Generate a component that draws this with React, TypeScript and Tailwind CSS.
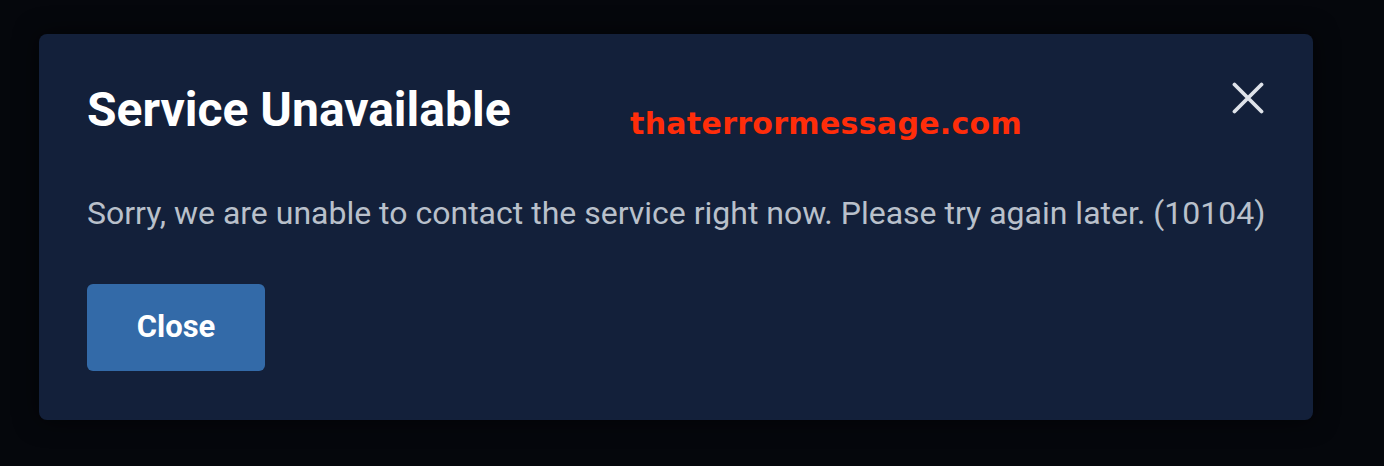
export default function App() {
  return (
    <div className="w-[1384px] h-[466px] bg-[#05070c] pt-[34px] pl-[39px] font-['Roboto',sans-serif]">
      <div className="relative w-[1274px] h-[386px] rounded-lg bg-[#13203a] p-12 shadow-[0_0_24px_rgba(0,0,0,0.6)]">
        <div className="flex items-start justify-between">
          <h1 className="text-[48px] leading-[56px] font-bold text-white">Service Unavailable</h1>
          <button className="w-8 h-8 mr-[1px] flex items-center justify-center text-[#dfe3ea]">
            <svg width="32" height="32" viewBox="0 0 32 32" fill="none" stroke="currentColor" strokeWidth="3.8" strokeLinecap="round">
              <path d="M2.5 2.5L29.5 29.5M29.5 2.5L2.5 29.5" />
            </svg>
          </button>
        </div>
        <p className="mt-[55px] whitespace-nowrap text-[32px] leading-10 text-[#b9c0cb]">
          Sorry, we are unable to contact the service right now. Please try again later. (10104)
        </p>
        <button className="mt-[51px] w-[178px] h-[87px] rounded-md bg-[#336aa8] text-[31px] font-bold text-white">
          Close
        </button>
        <span className="absolute left-[591px] top-[67px] text-[30px] font-bold tracking-[0.3px] text-[#ff2d0a] font-['DejaVu_Sans',sans-serif]">
          thaterrormessage.com
        </span>
      </div>
    </div>
  );
}
